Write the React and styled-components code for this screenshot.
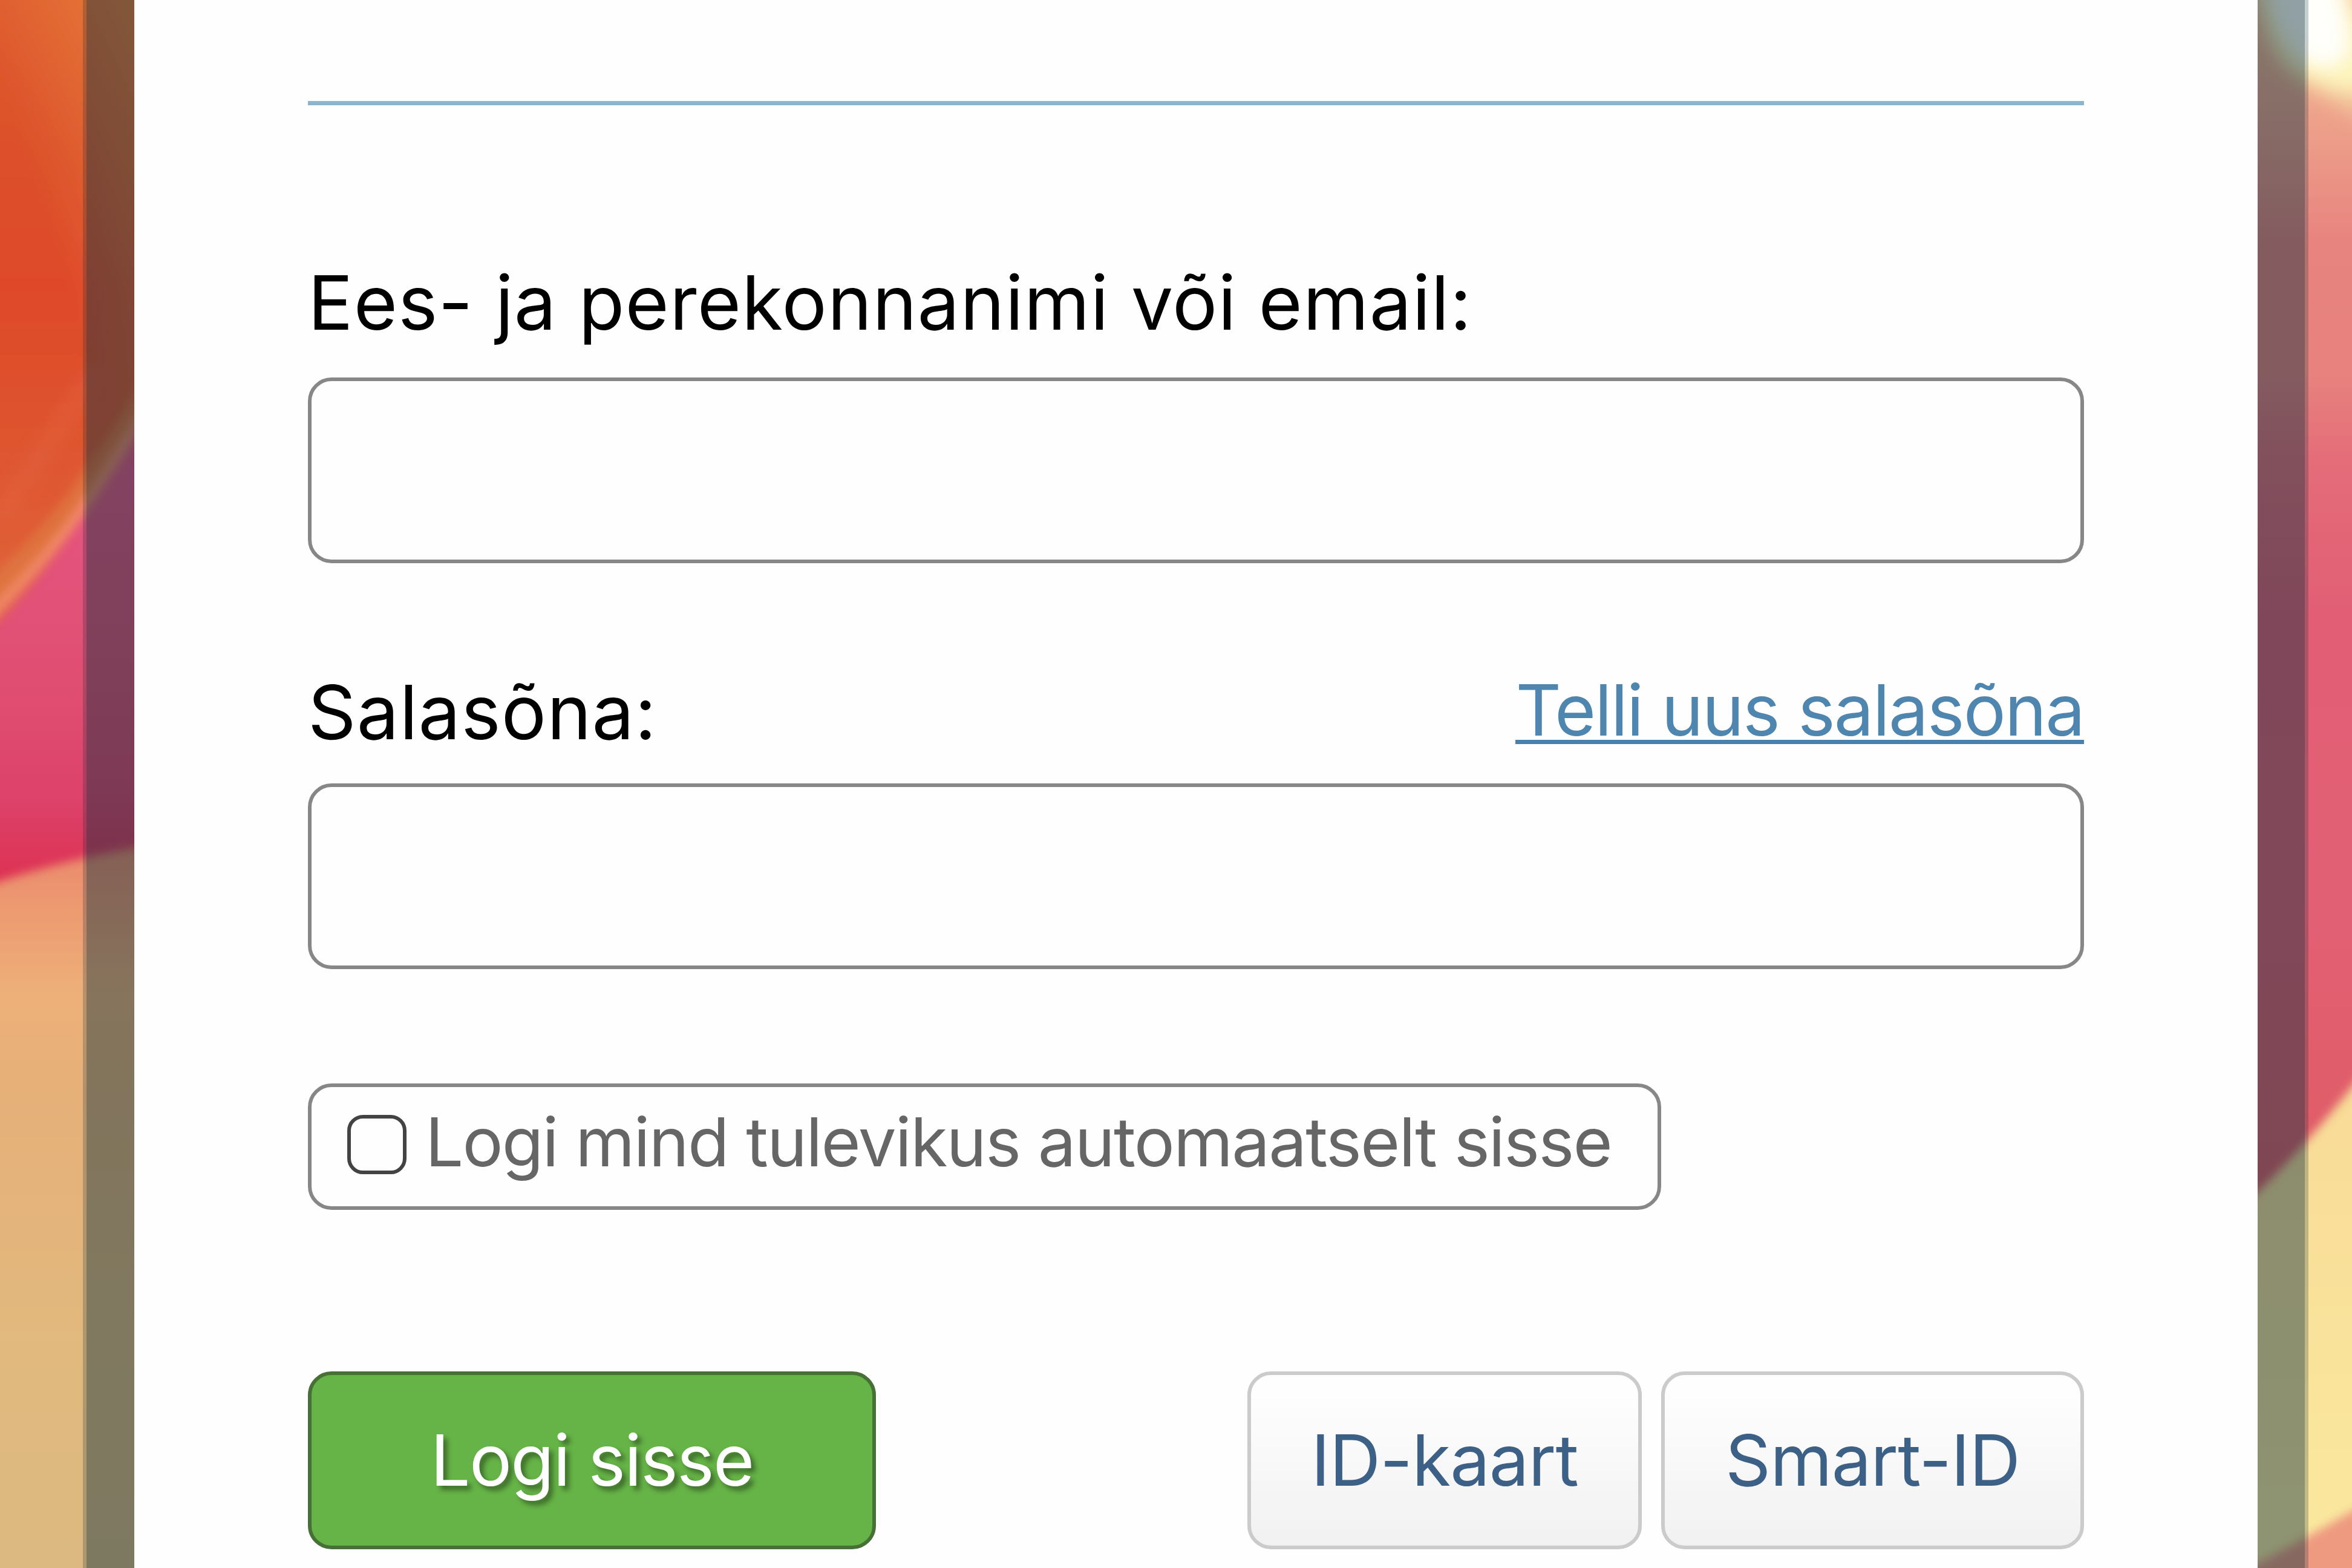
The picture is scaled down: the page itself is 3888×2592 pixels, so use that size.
import React from "react";
import styled, { createGlobalStyle } from "styled-components";

const GlobalStyle = createGlobalStyle`
  *, *::before, *::after { box-sizing: border-box; }
  body { margin: 0; overflow: hidden; font-family: Inter, "Liberation Sans", sans-serif; }
`;

const Page = styled.div`
  position: relative;
  display: flex;
  height: 2592px;
  padding: 0 72px 0 137px;
  overflow: hidden;
`;

const Wallpaper = styled.svg`
  position: absolute;
  inset: 0;
  width: 100%;
  height: 100%;
`;

const Frame = styled.div`
  position: relative;
  flex: 1;
  display: flex;
  border: solid rgba(10, 44, 58, 0.23);
  border-width: 0 6.5px;
`;

const Backdrop = styled.div`
  flex: 1;
  display: flex;
  padding: 0 78px 0 79px;
  background: linear-gradient(rgba(10, 44, 58, 0.45), rgba(10, 44, 58, 0.45));
`;

const Panel = styled.main`
  flex: 1;
  padding: 167px 287px 0;
  background: #fefefe;
`;

const Rule = styled.hr`
  height: 7px;
  margin: 0 0 251px;
  border: 0;
  background: #8cb4cb;
`;

const Form = styled.form`
  display: flex;
  flex-direction: column;
`;

const Field = styled.div`
  display: flex;
  flex-direction: column;
  margin-bottom: ${(p) => p.$after}px;
`;

const FieldHead = styled.div`
  display: flex;
  justify-content: space-between;
  height: 150px;
  margin-bottom: ${(p) => p.$gap}px;
`;

const Label = styled.label`
  padding-top: ${(p) => p.$drop || 0}px;
  font-size: 124px;
  line-height: 150px;
  letter-spacing: 1.1px;
  white-space: nowrap;
  color: #000;
`;

const ResetLink = styled.a`
  height: 131px;
  padding-top: 4px;
  border-bottom: 7px solid #4a80aa;
  font-size: 117px;
  font-weight: 400;
  line-height: 142px;
  letter-spacing: -1.9px;
  white-space: nowrap;
  color: #4f86b0;
  text-decoration: none;
`;

const Input = styled.input`
  width: 100%;
  height: 307px;
  padding: 0 40px;
  border: 6.5px solid #878787;
  border-radius: 39px;
  outline: none;
  background: #fefefe;
  font: 117px Inter, sans-serif;
`;

const Remember = styled.label`
  display: flex;
  align-items: flex-start;
  align-self: flex-start;
  gap: 31px;
  width: 2237px;
  height: 209px;
  margin-bottom: 267px;
  padding: 46px 0 0 59px;
  border: 6.5px solid #878787;
  border-radius: 39px;
`;

const Checkbox = styled.input`
  appearance: none;
  flex: none;
  width: 98px;
  height: 98px;
  margin: 0;
  border: 6.5px solid #434343;
  border-radius: 26px;
  background: #fefefe;
`;

const RememberText = styled.span`
  font-size: 112px;
  font-weight: 400;
  line-height: 88px;
  letter-spacing: -1.9px;
  white-space: nowrap;
  color: #666;
`;

const Actions = styled.div`
  display: flex;
  gap: 32px;
`;

const Button = styled.button`
  width: ${(p) => p.$width}px;
  height: 294px;
  padding: 0;
  border: 6.5px solid #cbcbcb;
  border-radius: 39px;
  background: linear-gradient(#fefefe 10%, #f1f1f1);
  font: 400 117px/142px Inter, sans-serif;
  letter-spacing: -1px;
  white-space: nowrap;
  color: #3c6086;
`;

const PrimaryButton = styled(Button)`
  margin-right: auto;
  border-color: #477036;
  background: #66b447;
  letter-spacing: -1.7px;
  color: #fff;
  text-shadow: 6.5px 6.5px 8px rgba(0, 0, 0, 0.42);
`;

function Scenery() {
  return (
    <Wallpaper viewBox="0 0 3888 2592" preserveAspectRatio="none" aria-hidden="true">
      <defs>
        <linearGradient id="orange" gradientUnits="userSpaceOnUse" x1="0" y1="0" x2="0" y2="1050">
          <stop offset="0" stopColor="#df5a2e" />
          <stop offset="0.25" stopColor="#dc4f2a" />
          <stop offset="0.45" stopColor="#df4a2b" />
          <stop offset="0.65" stopColor="#de522d" />
          <stop offset="1" stopColor="#e0653c" />
        </linearGradient>
        <linearGradient id="amber" gradientUnits="userSpaceOnUse" x1="20" y1="200" x2="260" y2="120">
          <stop offset="0" stopColor="#e8873f" stopOpacity="0" />
          <stop offset="1" stopColor="#e8873f" stopOpacity="0.7" />
        </linearGradient>
        <linearGradient id="pink" gradientUnits="userSpaceOnUse" x1="0" y1="800" x2="0" y2="1450">
          <stop offset="0" stopColor="#e55480" />
          <stop offset="0.5" stopColor="#e04f72" />
          <stop offset="0.8" stopColor="#dd426a" />
          <stop offset="1" stopColor="#dd3254" />
        </linearGradient>
        <linearGradient id="sand" gradientUnits="userSpaceOnUse" x1="0" y1="1410" x2="0" y2="2592">
          <stop offset="0" stopColor="#ea8a6c" />
          <stop offset="0.1" stopColor="#ed9e72" />
          <stop offset="0.2" stopColor="#edb079" />
          <stop offset="0.35" stopColor="#e5b079" />
          <stop offset="0.7" stopColor="#e1b97e" />
          <stop offset="1" stopColor="#dcb980" />
        </linearGradient>
        <linearGradient id="coral" gradientUnits="userSpaceOnUse" x1="0" y1="100" x2="0" y2="1950">
          <stop offset="0" stopColor="#f0ae90" />
          <stop offset="0.08" stopColor="#ec9a88" />
          <stop offset="0.16" stopColor="#e8847f" />
          <stop offset="0.28" stopColor="#e7827e" />
          <stop offset="0.36" stopColor="#e46c79" />
          <stop offset="0.5" stopColor="#e15e74" />
          <stop offset="0.75" stopColor="#e26074" />
          <stop offset="1" stopColor="#df5c66" />
        </linearGradient>
        <linearGradient id="lemon" gradientUnits="userSpaceOnUse" x1="0" y1="1850" x2="0" y2="2560">
          <stop offset="0" stopColor="#f8dc97" />
          <stop offset="1" stopColor="#fae89e" />
        </linearGradient>
        <filter id="soft" x="-20%" y="-20%" width="140%" height="140%">
          <feGaussianBlur stdDeviation="8" />
        </filter>
        <filter id="glow" x="-40%" y="-40%" width="180%" height="180%">
          <feGaussianBlur stdDeviation="15" />
        </filter>
      </defs>
      <rect width="300" height="1500" fill="url(#pink)" />
      <g filter="url(#soft)">
        <path d="M-60-60H290V600Q235 710 137 853Q75 945 0 1024L-60 1085Z" fill="url(#orange)" />
        <path d="M-60-60H290V600Q235 710 137 853Q75 945 0 1024L-60 1085Z" fill="url(#amber)" />
        <path d="M280 590Q225 690 130 822Q65 912-60 1020" fill="none" stroke="#df8045" strokeWidth="36" opacity="0.6" />
        <path d="M285 600Q230 705 133 845Q70 935-60 1060" fill="none" stroke="#f18866" strokeWidth="17" />
      </g>
      <path d="M0 850Q80 740 160 610" fill="none" stroke="#ea7250" strokeWidth="22" opacity="0.35" filter="url(#glow)" />
      <path d="M-60 1478Q90 1420 290 1390V2660H-60Z" fill="url(#sand)" filter="url(#soft)" />
      <rect x="3700" width="188" height="2000" fill="url(#coral)" />
      <g filter="url(#glow)">
        <path d="M3690-60H3960V220Q3850 175 3785 125Q3735 75 3722-20Z" fill="#f4cf9c" opacity="0.75" />
        <path d="M3730-60H3870Q3900 20 3920 60L3925 150Q3850 160 3790 115Q3745 75 3732-10Z" fill="#fdf4bc" />
        <path d="M3758-60H3850Q3885 15 3882 85Q3855 130 3805 95Q3765 60 3752-10Z" fill="#fffffb" />
        <path d="M3868-60H3960V80Q3895 60 3868-60Z" fill="#f3c596" />
      </g>
      <path d="M3680 2016Q3790 1928 3940 1730V2660H3680Z" fill="url(#lemon)" filter="url(#soft)" />
      <path d="M3680 2612Q3800 2550 3940 2468V2700H3680Z" fill="#ee9a80" filter="url(#soft)" />
    </Wallpaper>
  );
}

export default function App() {
  return (
    <>
      <GlobalStyle />
      <Page>
        <Scenery />
        <Frame>
          <Backdrop>
            <Panel>
              <Rule />
              <Form onSubmit={(e) => e.preventDefault()}>
                <Field $after={168}>
                  <FieldHead $gap={49}>
                    <Label htmlFor="user">Ees- ja perekonnanimi või email:</Label>
                  </FieldHead>
                  <Input id="user" type="text" />
                </Field>
                <Field $after={189}>
                  <FieldHead $gap={46}>
                    <Label htmlFor="pass" $drop={3}>Salasõna:</Label>
                    <ResetLink href="#">Telli uus salasõna</ResetLink>
                  </FieldHead>
                  <Input id="pass" type="password" />
                </Field>
                <Remember>
                  <Checkbox type="checkbox" />
                  <RememberText>Logi mind tulevikus automaatselt sisse</RememberText>
                </Remember>
                <Actions>
                  <PrimaryButton type="submit" $width={939}>Logi sisse</PrimaryButton>
                  <Button type="button" $width={652}>ID-kaart</Button>
                  <Button type="button" $width={699}>Smart-ID</Button>
                </Actions>
              </Form>
            </Panel>
          </Backdrop>
        </Frame>
      </Page>
    </>
  );
}
